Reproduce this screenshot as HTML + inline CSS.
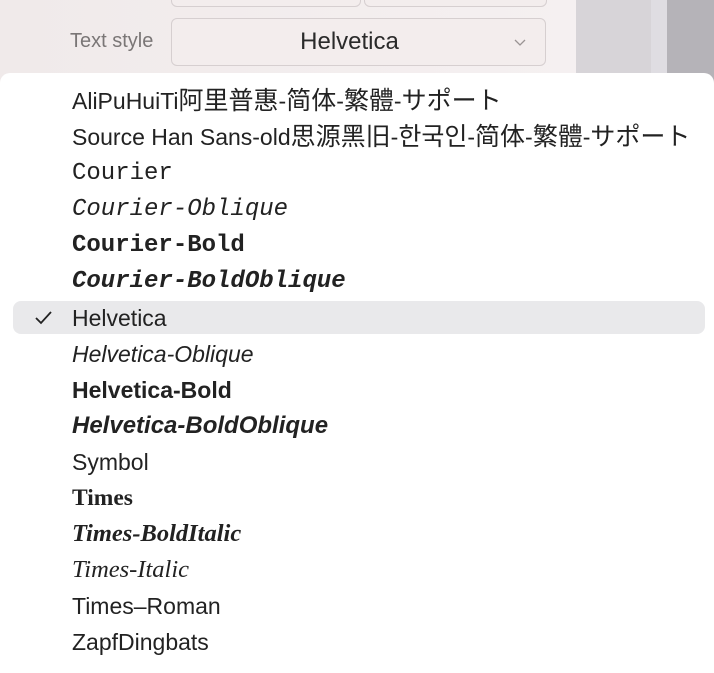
<!DOCTYPE html>
<html><head><style>
body{margin:0;width:714px;height:666px;overflow:hidden;position:relative;background:#f2eded;font-family:"Liberation Sans","Noto Sans CJK JP",sans-serif;}
.bg{position:absolute;left:0;top:0;width:576px;height:666px;background:linear-gradient(90deg,#f0eaea,#f5f0f1);}
.side{position:absolute;left:576px;top:0;width:75px;height:666px;background:#d7d4d8;}
.side2{position:absolute;left:651px;top:0;width:16px;height:666px;background:#dfdde2;}
.side3{position:absolute;left:667px;top:0;width:47px;height:666px;background:#b5b3b8;}
.box{position:absolute;border:1px solid #d6cfd0;border-radius:6px;background:#f3eded;}
.lbl{position:absolute;left:70px;top:30px;font-size:20px;color:#7a7676;}
.pop{position:absolute;left:0;top:73px;width:714px;height:600px;background:#fff;border-radius:10px 10px 0 0;}
.row{position:absolute;left:72px;font-size:23px;color:#222;line-height:36px;height:36px;white-space:nowrap;}
.cjk{font-size:25px;}
.mono{font-family:"Liberation Mono",monospace;font-size:24px;}
.serif{font-family:"Liberation Serif",serif;font-size:23.5px;}
.hl{position:absolute;left:13px;top:301px;width:692px;height:33px;background:#e9e9eb;border-radius:8px;}
</style></head><body>
<div class="bg"></div><div class="side"></div><div class="side2"></div><div class="side3"></div>
<div class="box" style="left:171px;top:-10px;width:188px;height:15px"></div>
<div class="box" style="left:364px;top:-10px;width:181px;height:15px"></div>
<div class="lbl">Text style</div>
<div class="box" style="left:171px;top:18px;width:373px;height:46px"></div>
<div style="position:absolute;left:162px;top:18px;width:375px;height:48px;line-height:48px;text-align:center;font-size:24px;color:#2a2a2a">Helvetica</div>
<svg style="position:absolute;left:513px;top:37px" width="14" height="10"><path d="M2 3 L7 8 L12 3" fill="none" stroke="#9a9494" stroke-width="1.3"/></svg>
<div class="pop"></div>
<div class="hl"></div>
<svg style="position:absolute;left:34px;top:310px" width="20" height="16"><path d="M2 8 L7 13 L17 2" fill="none" stroke="#222" stroke-width="1.8"/></svg>
<div class="row" style="top:83px">AliPuHuiTi<span class="cjk">阿里普惠</span>-<span class="cjk">简体</span>-<span class="cjk">繁體</span>-<span class="cjk">サポート</span></div>
<div class="row" style="top:119px">Source Han Sans-old<span class="cjk">思源黑旧</span>-<span class="cjk">한국인</span>-<span class="cjk">简体</span>-<span class="cjk">繁體</span>-<span class="cjk">サポート</span></div>
<div class="row mono" style="top:156px">Courier</div>
<div class="row mono" style="top:192px;font-style:italic">Courier-Oblique</div>
<div class="row mono" style="top:228px;font-weight:bold">Courier-Bold</div>
<div class="row mono" style="top:264px;font-weight:bold;font-style:italic">Courier-BoldOblique</div>
<div class="row" style="top:300px">Helvetica</div>
<div class="row" style="top:336px;font-style:italic">Helvetica-Oblique</div>
<div class="row" style="top:372px;font-weight:bold">Helvetica-Bold</div>
<div class="row" style="top:408px;font-weight:bold;font-style:italic;font-size:24px">Helvetica-BoldOblique</div>
<div class="row" style="top:444px">Symbol</div>
<div class="row serif" style="top:480px;font-weight:bold">Times</div>
<div class="row serif" style="top:516px;font-weight:bold;font-style:italic;font-size:24.5px">Times-BoldItalic</div>
<div class="row serif" style="top:552px;font-style:italic;font-size:24.5px">Times-Italic</div>
<div class="row" style="top:588px">Times–Roman</div>
<div class="row" style="top:624px">ZapfDingbats</div>
</body></html>
